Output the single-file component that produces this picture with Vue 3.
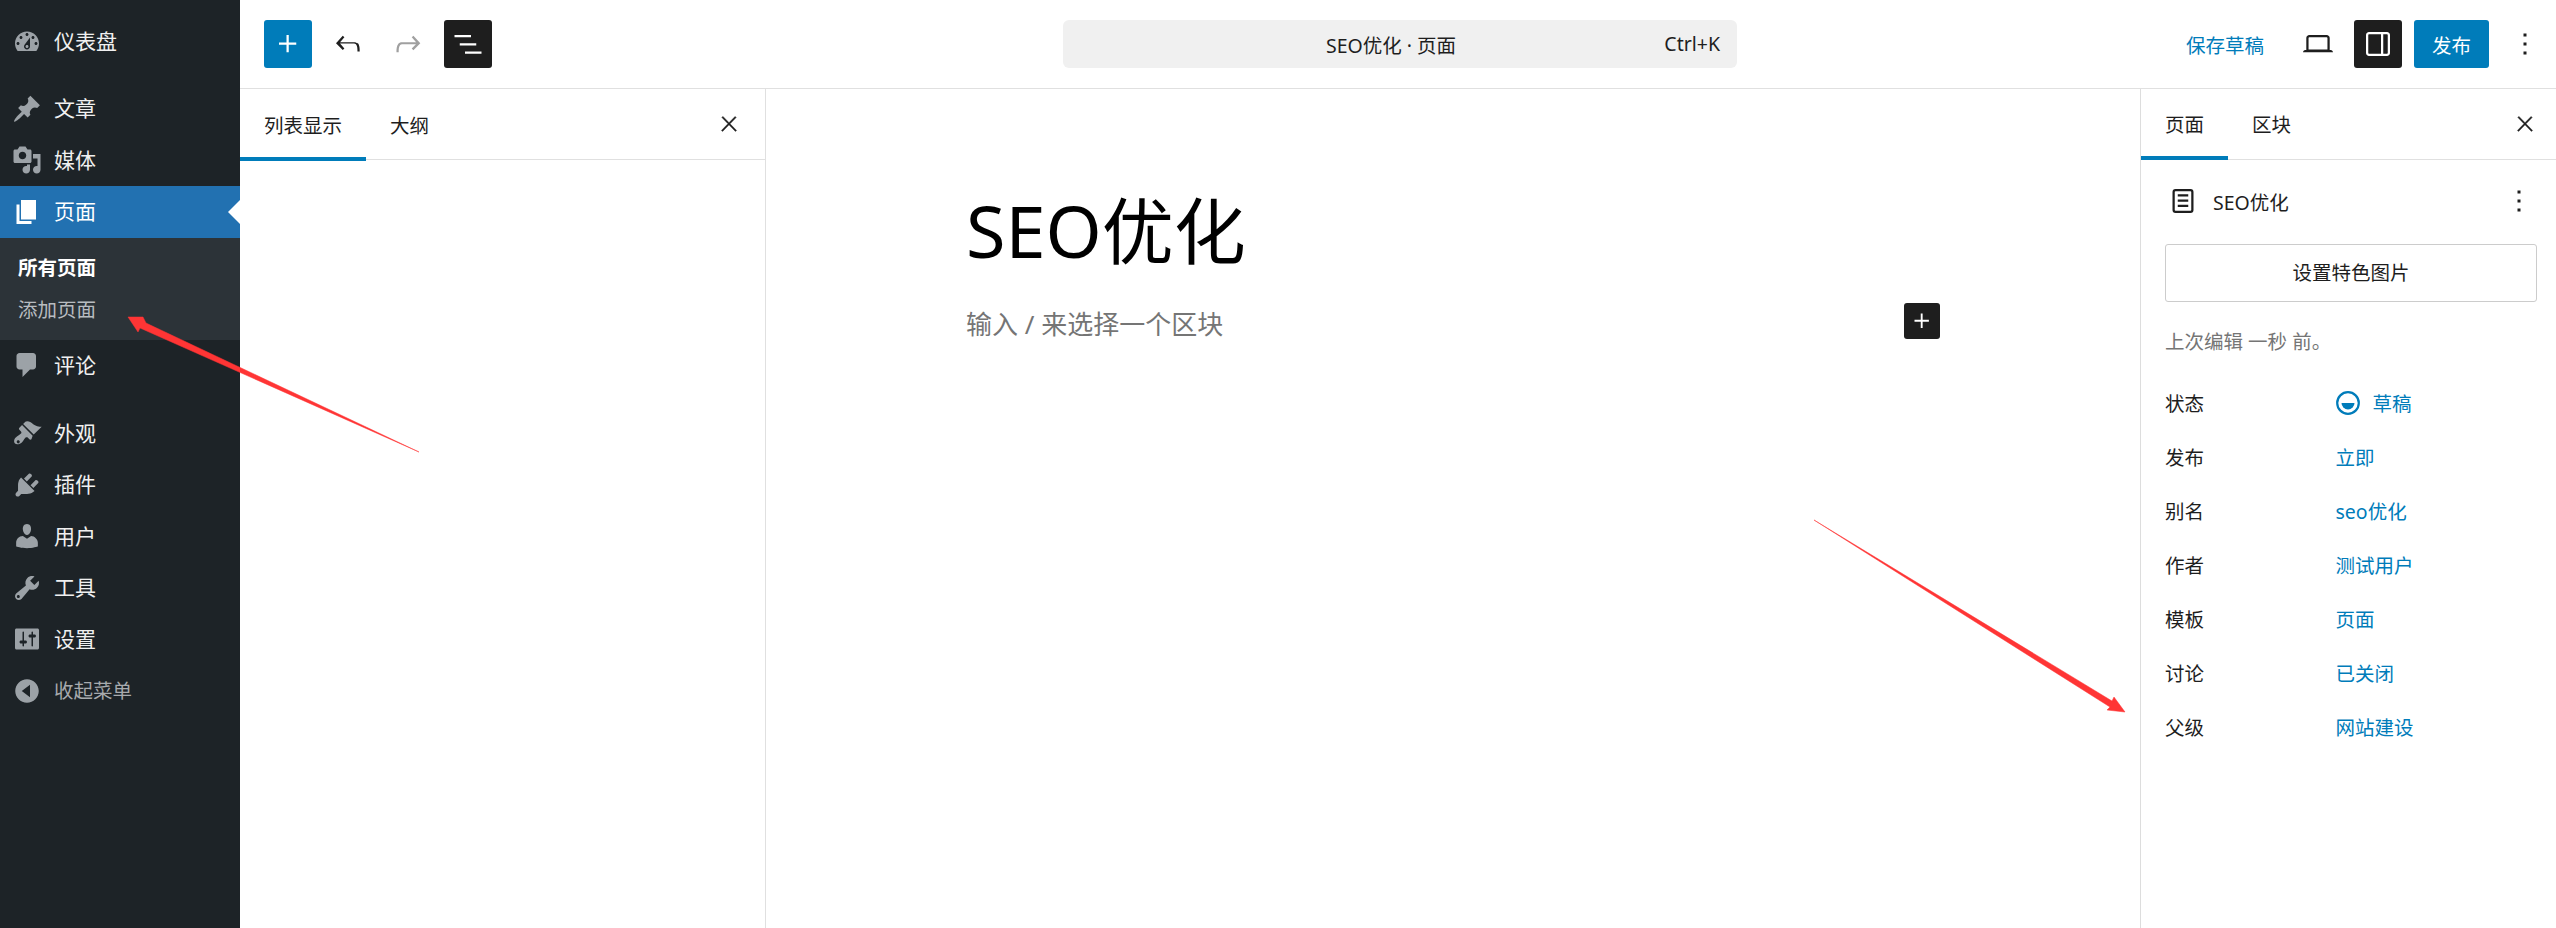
<script setup>
const dash = {
  dashboard: 'M3.76 16h12.48c1.1-1.37 1.76-3.11 1.76-5 0-4.42-3.58-8-8-8s-8 3.58-8 8c0 1.89.66 3.63 1.76 5zM10 4c.55 0 1 .45 1 1s-.45 1-1 1-1-.45-1-1 .45-1 1-1zM6 6c.55 0 1 .45 1 1s-.45 1-1 1-1-.45-1-1 .45-1 1-1zm8 0c.55 0 1 .45 1 1s-.45 1-1 1-1-.45-1-1 .45-1 1-1zm-5.37 5.55L12 7v6c0 1.1-.9 2-2 2s-2-.9-2-2c0-.57.24-1.08.63-1.45zM4 10c.55 0 1 .45 1 1s-.45 1-1 1-1-.45-1-1 .45-1 1-1zm12 0c.55 0 1 .45 1 1s-.45 1-1 1-1-.45-1-1 .45-1 1-1zm-5 3c0-.55-.45-1-1-1s-1 .45-1 1 .45 1 1 1 1-.45 1-1z',
  post: 'M10.44 3.02l1.82-1.82 6.36 6.35-1.83 1.82c-1.05-.68-2.48-.57-3.41.36l-.75.75c-.92.93-1.04 2.35-.35 3.41l-1.83 1.82-2.41-2.41-2.8 2.79c-.42.42-3.38 2.71-3.8 2.29s1.86-3.39 2.28-3.81l2.79-2.79L4.1 9.36l1.83-1.82c1.05.69 2.48.57 3.4-.36l.75-.75c.93-.92 1.05-2.35.36-3.41z',
  media: 'M13 11V4c0-.55-.45-1-1-1h-1.67L9 1H5L3.67 3H2c-.55 0-1 .45-1 1v7c0 .55.45 1 1 1h10c.55 0 1-.45 1-1zM7 4.5c1.38 0 2.5 1.12 2.5 2.5S8.38 9.5 7 9.5 4.5 8.38 4.5 7 5.62 4.5 7 4.5zM14 6h5v10.5c0 1.38-1.12 2.5-2.5 2.5S14 17.88 14 16.5s1.12-2.5 2.5-2.5c.17 0 .34.02.5.05V9h-3V6zm-4 8.05V13h2v3.5c0 1.38-1.12 2.5-2.5 2.5S7 17.88 7 16.5 8.12 14 9.5 14c.17 0 .34.02.5.05z',
  page: 'M6 15V2h10v13H6zm-1 1h8v2H3V5h2v11z',
  comments: 'M5 2h9c1.1 0 2 .9 2 2v7c0 1.1-.9 2-2 2h-2l-5 5v-5H5c-1.1 0-2-.9-2-2V4c0-1.1.9-2 2-2z',
  appearance: 'M14.48 11.06L7.41 3.99l1.5-1.5c.5-.56 2.3-.47 3.51.32 1.21.8 1.43 1.28 2.91 2.1 1.18.64 2.45 1.26 4.45.85zm-.71.71L6.7 4.7 4.93 6.47c-.39.39-.39 1.02 0 1.41l1.06 1.06c.39.39.39 1.03 0 1.42-.6.6-1.43 1.11-2.21 1.69-.35.26-.7.53-1.01.84C1.43 13.71.99 16.03 2 17s3.3.55 4.54-.7c.31-.31.58-.66.84-1.01.58-.78 1.09-1.61 1.69-2.21.39-.39 1.03-.39 1.42 0l1.06 1.06c.39.39 1.02.39 1.41 0zm-9.6 3.1c.57 0 1.03.46 1.03 1.03 0 .57-.46 1.03-1.03 1.03s-1.03-.46-1.03-1.03c0-.57.46-1.03 1.03-1.03z',
  plugin: 'M13.11 4.36L9.87 7.6 8 5.73l3.24-3.24c.35-.34 1.05-.2 1.56.32.52.51.66 1.21.31 1.55zm-8 1.77l.91-1.12 9.01 9.01-1.19.84c-.71.71-2.63 1.16-3.82 1.16H6.14L4.9 17.26c-.59.59-1.54.59-2.12 0-.59-.58-.59-1.53 0-2.12l1.24-1.24v-3.88c0-1.13.4-3.19 1.09-3.89zm7.26 3.97l3.24-3.24c.34-.35 1.04-.21 1.55.31.52.51.66 1.21.31 1.55l-3.24 3.25z',
  users: 'M10 9.25c-2.27 0-2.73-3.44-2.73-3.44C7 4.02 7.82 2 9.97 2c2.16 0 2.98 2.02 2.71 3.81 0 0-.41 3.44-2.68 3.44zm0 2.57L12.72 10c2.39 0 4.52 2.33 4.52 4.53v2.49s-3.65 1.13-7.24 1.13c-3.65 0-7.24-1.13-7.24-1.13v-2.49c0-2.25 1.94-4.48 4.47-4.48z',
  tools: 'M16.68 9.77c-1.34 1.34-3.3 1.67-4.95.99l-5.41 6.52c-.99.99-2.59.99-3.57 0-.99-.98-.99-2.58 0-3.57l6.52-5.42c-.68-1.65-.35-3.61.99-4.95 1.28-1.28 3.12-1.62 4.72-1.06l-2.89 2.89 2.82 2.82 2.86-2.87c.53 1.58.18 3.4-1.09 4.67zM4.93 16.43c.39-.39.39-1.02 0-1.41-.39-.39-1.02-.39-1.41 0-.39.39-.39 1.02 0 1.41.39.39 1.02.39 1.41 0z',
  settings: 'M18 16V4c0-.55-.45-1-1-1H3c-.55 0-1 .45-1 1v12c0 .55.45 1 1 1h14c.55 0 1-.45 1-1zM8 11h1c.55 0 1 .45 1 1s-.45 1-1 1H8v1.5c0 .28-.22.5-.5.5s-.5-.22-.5-.5V13H6c-.55 0-1-.45-1-1s.45-1 1-1h1V5.500c0-.28.22-.5.5-.5s.5.22.5.5V11zm5-2h-1c-.55 0-1-.45-1-1s.45-1 1-1h1V5.500c0-.28.22-.5.5-.5s.5.22.5.5V7h1c.55 0 1 .45 1 1s-.45 1-1 1h-1v5.500c0 .28-.22.5-.5.5s-.5-.22-.5-.5V9z',
  collapse: 'M10 2.160c4.330 0 7.840 3.510 7.840 7.840s-3.510 7.840-7.840 7.840S2.160 14.330 2.160 10 5.670 2.160 10 2.160zM12 5.800L6.500 10l5.500 4.200V5.800z',
}
const g = {
  plus: 'M11 12.500V17.500H12.500V12.500H17.500V11H12.500V6H11V11H6V12.500H11Z',
  undo: 'M18.300 11.700c-.6-.6-1.400-.9-2.300-.9H6.700l2.900-3.300-1.100-1-4.500 5L8.500 16l1.100-1-2.900-3.300H16c.5 0 .9.2 1.300.5 1 1 1 3.400 1 4.500v.3h1.500v-.2c0-1.500 0-4.300-1.500-5.600z',
  redo: 'M15.600 6.500l-1.100 1 2.900 3.300H8c-.9 0-1.700.3-2.300.9-1.400 1.500-1.400 4.200-1.400 5.600v.2h1.500v-.3c0-1.100 0-3.500 1-4.500.3-.3.7-.5 1.300-.5h9.200L14.500 15l1.100 1.100 4.600-4.600-4.600-5z',
  list: 'M3 6h11v1.500H3V6Zm3.500 5.500h11V13h-11v-1.500ZM21 17H10v1.500h11V17Z',
  laptop: 'M20.500 16h-.7V8c0-1.100-.9-2-2-2H6.200c-1.100 0-2 .9-2 2v8h-.7c-.8 0-1.500.7-1.500 1.500h20c0-.8-.7-1.500-1.500-1.500zM5.700 8c0-.3.2-.5.5-.5h11.600c.3 0 .5.2.5.5v7.600H5.700V8z',
  drawer: 'M18 4H6c-1.100 0-2 .9-2 2v12c0 1.100.9 2 2 2h12c1.100 0 2-.9 2-2V6c0-1.100-.9-2-2-2zm-4 14.500H6c-.3 0-.5-.2-.5-.5V6c0-.3.2-.5.5-.5h8v13zm4.500-.5c0 .3-.2.5-.5.5h-2.500v-13H18c.3 0 .5.2.5.5v12z',
  more: 'M13 19h-2v-2h2v2zm0-6h-2v-2h2v2zm0-6h-2V5h2v2z',
  close: 'M13 11.800l6.100-6.300-1-1-6.100 6.200-6.100-6.300-1 1 6.100 6.300-6.500 6.700 1 1 6.500-6.600 6.500 6.600 1-1z',
  doc: 'M15.500 7.500h-7V9h7V7.500Zm-7 3.500h7v1.500h-7V11Zm7 3.500h-7V16h7v-1.500ZM17 4H7a2 2 0 0 0-2 2v12a2 2 0 0 0 2 2h10a2 2 0 0 0 2-2V6a2 2 0 0 0-2-2Zm-10 1.500h10a.5.5 0 0 1 .5.5v12a.5.5 0 0 1-.5.5H7a.5.5 0 0 1-.5-.5V6a.5.5 0 0 1 .5-.5Z',
}
const group1 = [{ t: '文章', i: dash.post }, { t: '媒体', i: dash.media }]
const group2 = [
  { t: '外观', i: dash.appearance },
  { t: '插件', i: dash.plugin },
  { t: '用户', i: dash.users },
  { t: '工具', i: dash.tools },
  { t: '设置', i: dash.settings },
]
const rows = [
  { k: '发布', v: '立即' },
  { k: '别名', v: 'seo优化' },
  { k: '作者', v: '测试用户' },
  { k: '模板', v: '页面' },
  { k: '讨论', v: '已关闭' },
  { k: '父级', v: '网站建设' },
]
</script>

<template>
  <div class="app">
    <aside class="side">
      <div class="item">
        <svg class="di" viewBox="0 0 20 20"><path :d="dash.dashboard" /></svg><span>仪表盘</span>
      </div>
      <div class="sep sep-first"></div>
      <div v-for="m in group1" :key="m.t" class="item">
        <svg class="di" viewBox="0 0 20 20"><path :d="m.i" /></svg><span>{{ m.t }}</span>
      </div>
      <div class="item active">
        <svg class="di" viewBox="0 0 20 20"><path :d="dash.page" /></svg><span>页面</span>
        <i class="notch"></i>
      </div>
      <div class="sub">
        <div class="sub-a">所有页面</div>
        <div class="sub-b">添加页面</div>
      </div>
      <div class="item">
        <svg class="di" viewBox="0 0 20 20"><path :d="dash.comments" /></svg><span>评论</span>
      </div>
      <div class="sep"></div>
      <div v-for="m in group2" :key="m.t" class="item">
        <svg class="di" viewBox="0 0 20 20"><path :d="m.i" /></svg><span>{{ m.t }}</span>
      </div>
      <div class="item collapse">
        <svg class="di" viewBox="0 0 20 20"><path :d="dash.collapse" fill-rule="evenodd" /></svg><span>收起菜单</span>
      </div>
    </aside>

    <div class="main">
      <header class="top">
        <div class="top-left">
          <button class="ib primary"><svg viewBox="0 0 24 24"><path :d="g.plus" /></svg></button>
          <button class="ib"><svg viewBox="0 0 24 24"><path :d="g.undo" /></svg></button>
          <button class="ib off"><svg viewBox="0 0 24 24"><path :d="g.redo" /></svg></button>
          <button class="ib dark"><svg viewBox="0 0 24 24"><path :d="g.list" /></svg></button>
        </div>
        <div class="cmd">
          <span class="cmd-t">SEO优化 · 页面</span>
          <span class="cmd-k">Ctrl+K</span>
        </div>
        <div class="top-right">
          <span class="save">保存草稿</span>
          <button class="ib laptop"><svg viewBox="0 0 24 24"><path :d="g.laptop" /></svg></button>
          <button class="ib dark"><svg viewBox="0 0 24 24"><path :d="g.drawer" /></svg></button>
          <button class="publish">发布</button>
          <button class="ib"><svg viewBox="0 0 24 24"><path :d="g.more" /></svg></button>
        </div>
      </header>

      <div class="body">
        <section class="left">
          <div class="tabs">
            <span class="tab on">列表显示</span>
            <span class="tab">大纲</span>
            <svg class="x" viewBox="0 0 24 24"><path :d="g.close" /></svg>
          </div>
        </section>

        <section class="canvas">
          <div class="content">
            <h1 class="title">SEO优化</h1>
            <div class="ph-row">
              <span class="ph">输入 / 来选择一个区块</span>
              <button class="add"><svg viewBox="0 0 24 24"><path :d="g.plus" /></svg></button>
            </div>
          </div>
        </section>

        <section class="right">
          <div class="tabs">
            <span class="tab on">页面</span>
            <span class="tab">区块</span>
            <svg class="x" viewBox="0 0 24 24"><path :d="g.close" /></svg>
          </div>
          <div class="panel">
            <div class="head">
              <svg class="doc" viewBox="0 0 24 24"><path :d="g.doc" fill-rule="evenodd" /></svg>
              <span class="head-t">SEO优化</span>
              <svg class="kebab" viewBox="0 0 24 24"><path :d="g.more" /></svg>
            </div>
            <div class="feat">设置特色图片</div>
            <p class="edited">上次编辑 一秒 前。</p>
            <div class="row">
              <span class="k">状态</span>
              <span class="v status">
                <svg class="draft" viewBox="0 0 24 24">
                  <circle cx="12" cy="12" r="10.800" fill="none" stroke="#007cba" stroke-width="2.200" />
                  <path d="M5.500 12h13a6.500 6.500 0 0 1-13 0z" fill="#007cba" />
                </svg>
                草稿
              </span>
            </div>
            <div v-for="r in rows" :key="r.k" class="row">
              <span class="k">{{ r.k }}</span>
              <span class="v">{{ r.v }}</span>
            </div>
          </div>
        </section>
      </div>
    </div>

    <svg class="arrows" viewBox="0 0 2556 928">
      <polygon points="128,317 143,317 146,323 419,452 140,328 138,332" fill="#ff3535" stroke="#ff3535" stroke-width=".5" />
      <polygon points="1814,520 2112,701 2114,697 2125,712 2107,710 2110,707" fill="#ff3535" stroke="#ff3535" stroke-width=".5" />
    </svg>
  </div>
</template>

<style scoped>
.app {
  position: relative;
  display: flex;
  width: 2556px;
  height: 928px;
  overflow: hidden;
  background: #fff;
  font-family: "Noto Sans", "Noto Sans CJK SC", sans-serif;
  color: #1e1e1e;
}
.side {
  width: 240px;
  flex: none;
  background: #1d2327;
  padding-top: 16px;
  color: #f0f0f0;
}
.sep { height: 16.500px; }
.sep-first { height: 15.500px; }
.item {
  position: relative;
  display: flex;
  align-items: center;
  height: 51.500px;
  font-size: 21px;
  line-height: 1;
}
.item .di {
  width: 54px;
  height: 30px;
  flex: none;
  fill: #9ca2a7;
}
.item.active { background: #2271b1; color: #fff; }
.item.active .di { fill: #fff; }
.notch {
  position: absolute;
  right: 0;
  top: 14px;
  border: 12px solid transparent;
  border-left: 0;
  border-right-color: #fff;
}
.collapse { font-size: 19.500px; color: #a7aaad; }
.sub {
  height: 102px;
  box-sizing: border-box;
  background: #2c3338;
  padding: 9px 0 0 18px;
  font-size: 19.500px;
}
.sub-a { height: 42px; line-height: 42px; color: #fff; font-weight: 700; }
.sub-b { height: 42px; line-height: 42px; color: #b8bcc0; }
.main { flex: 1; min-width: 0; display: flex; flex-direction: column; }
.top {
  height: 88px;
  flex: none;
  border-bottom: 1.500px solid #e0e0e0;
  display: grid;
  grid-template-columns: 823px 674px 1fr;
  align-items: center;
}
.top-left { display: flex; align-items: center; gap: 12px; padding-left: 24px; }
.top-right { display: flex; align-items: center; justify-content: flex-end; padding-right: 7px; }
.ib {
  width: 48px;
  height: 48px;
  padding: 6px;
  border: 0;
  border-radius: 3px;
  background: transparent;
  fill: #1e1e1e;
  display: flex;
}
.ib svg { width: 36px; height: 36px; }
.primary { background: #007cba; fill: #fff; }
.dark { background: #1e1e1e; fill: #fff; }
.off { fill: #a0a0a0; }
.laptop { margin: 0 12px 0 30px; }
.cmd {
  position: relative;
  height: 48px;
  border-radius: 6px;
  background: #f0f0f0;
  display: flex;
  align-items: center;
  justify-content: center;
  font-size: 19.500px;
}
.cmd-t { margin-left: -18px; }
.cmd-k { position: absolute; right: 17px; top: 0; line-height: 48px; }
.save { font-size: 19.500px; color: #007cba; }
.publish {
  width: 75px;
  height: 48px;
  margin: 0 12px;
  border: 0;
  border-radius: 3px;
  background: #007cba;
  color: #fff;
  font: inherit;
  font-size: 19.500px;
}
.body { flex: 1; display: flex; min-height: 0; }
.left { width: 525px; flex: none; border-right: 1.500px solid #e0e0e0; }
.right { width: 415px; flex: none; border-left: 1.500px solid #ddd; }
.tabs {
  position: relative;
  height: 70px;
  border-bottom: 1.500px solid #e0e0e0;
  display: flex;
  font-size: 19.500px;
}
.right .tabs { height: 69.500px; }
.tab { display: flex; align-items: center; padding: 0 24px; height: 70px; }
.tab.on {
  box-sizing: border-box;
  height: 71.500px;
  padding-bottom: 1.500px;
  box-shadow: inset 0 -4px 0 #007cba;
}
.right .tab { height: 69.500px; }
.right .tab.on { height: 71px; }
.x {
  position: absolute;
  top: 23px;
  width: 24px;
  height: 24px;
  fill: #1e1e1e;
  stroke: #1e1e1e;
  stroke-width: .5px;
}
.left .x { right: 24.500px; }
.right .x { right: 19px; }
.canvas { flex: 1; min-width: 0; }
.content { width: 974px; margin: 0 auto; padding-top: 98px; }
.title {
  margin: 0;
  font-size: 72px;
  font-weight: 400;
  line-height: 1.200;
  color: #000;
}
.ph-row { display: flex; justify-content: space-between; align-items: flex-start; margin-top: 30px; }
.ph { font-size: 26px; line-height: 36px; color: #757575; padding-top: 3px; }
.add {
  width: 36px;
  height: 36px;
  padding: 3px;
  border: 0;
  border-radius: 3px;
  background: #1e1e1e;
  fill: #fff;
  display: flex;
}
.add svg { width: 30px; height: 30px; }
.panel { padding: 0 19px 0 24px; }
.head {
  position: relative;
  display: flex;
  align-items: center;
  height: 84px;
  padding-bottom: 1px;
  box-sizing: border-box;
  font-size: 19.500px;
}
.doc { width: 36px; height: 36px; fill: #1e1e1e; }
.head-t { margin-left: 12px; }
.kebab { position: absolute; right: 0; top: 23.500px; width: 36px; height: 36px; fill: #1e1e1e; }
.feat {
  height: 58px;
  line-height: 56px;
  box-sizing: border-box;
  border: 1.500px solid #ccc;
  border-radius: 3px;
  text-align: center;
  font-size: 19.500px;
}
.edited { margin: 0; height: 74px; padding-top: 25px; box-sizing: border-box; font-size: 19.500px; line-height: 30px; color: #757575; }
.row { display: flex; align-items: center; height: 54px; font-size: 19.500px; }
.k { width: 170.500px; flex: none; }
.v { color: #007cba; }
.status { display: flex; align-items: center; gap: 13px; }
.draft { width: 24px; height: 24px; }
.arrows { position: absolute; left: 0; top: 0; width: 2556px; height: 928px; pointer-events: none; }
</style>
